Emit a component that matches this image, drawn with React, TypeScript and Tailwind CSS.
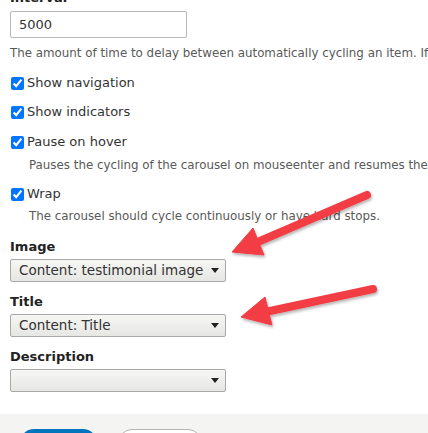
import React from 'react';

const font = { fontFamily: '"DejaVu Sans", "Lucida Grande", Arial, sans-serif' };

function Check({ label, className = '' }: { label: string; className?: string }) {
  return (
    <label className={`flex items-center h-[18px] pl-[11px] ${className}`}>
      <input type="checkbox" checked readOnly className="w-[13px] h-[13px] m-0 accent-[#0075ff]" />
      <span className="ml-[3px] text-[13px] text-[#333]">{label}</span>
    </label>
  );
}

function Select({ value, className = '' }: { value: string; className?: string }) {
  return (
    <div
      className={`ml-[10px] w-[216px] h-[23px] flex items-center justify-between pl-[8px] pr-[6px] border border-[#a8a8a8] rounded-[2px] bg-gradient-to-b from-[#f6f6f4] to-[#e6e6e3] ${className}`}
    >
      <span className="text-[13.5px] text-[#333] leading-none whitespace-nowrap">{value}</span>
      <span className="w-0 h-0 border-l-[4px] border-r-[4px] border-t-[5px] border-l-transparent border-r-transparent border-t-[#222]" />
    </div>
  );
}

export default function App() {
  return (
    <div className="relative w-[428px] h-[433px] overflow-hidden bg-white" style={font}>
      <div className="text-[13px] font-bold text-[#222] leading-[16px] pl-[10px] mt-[-10px]">Interval</div>
      <div className="ml-[10px] mt-[5px] w-[177px] h-[27px] border border-[#b8b8b8] rounded-[2px] flex items-center pl-[8px] text-[13px] text-[#333]">
        5000
      </div>
      <div className="mt-[7px] pl-[10px] text-[11.85px] leading-[16px] text-[#595959] whitespace-nowrap">
        The amount of time to delay between automatically cycling an item. If false, carousel will not automatically cycle.
      </div>

      <Check label="Show navigation" className="mt-[13px]" />
      <Check label="Show indicators" className="mt-[11px]" />
      <Check label="Pause on hover" className="mt-[12px]" />
      <div className="mt-[6px] pl-[29px] text-[11.85px] leading-[16px] text-[#595959] whitespace-nowrap">
        Pauses the cycling of the carousel on mouseenter and resumes the cycling on mouseleave.
      </div>
      <Check label="Wrap" className="mt-[12px]" />
      <div className="mt-[5px] pl-[29px] text-[11.85px] leading-[16px] text-[#595959] whitespace-nowrap">
        The carousel should cycle continuously or have hard stops.
      </div>

      <div className="mt-[15px] pl-[10px] text-[13px] font-bold text-[#222] leading-[16px]">Image</div>
      <Select value="Content: testimonial image" className="mt-[4px]" />
      <div className="mt-[12px] pl-[10px] text-[13px] font-bold text-[#222] leading-[16px]">Title</div>
      <Select value="Content: Title" className="mt-[4px]" />
      <div className="mt-[12px] pl-[10px] text-[13px] font-bold text-[#222] leading-[16px]">Description</div>
      <Select value="" className="mt-[4px]" />

      <div className="mt-[22px] h-[40px] bg-[#f4f4f2] flex items-start pt-[15px] pl-[20px] gap-[21px]">
        <div className="w-[77px] h-[30px] rounded-[14px] bg-[#0074bd]" />
        <div className="w-[84px] h-[30px] rounded-[14px] bg-white border border-[#b6b6b6]" />
      </div>

      <svg className="absolute inset-0 pointer-events-none" width="428" height="433" viewBox="0 0 428 433">
        <defs>
          <filter id="sh" x="-20%" y="-20%" width="140%" height="140%">
            <feDropShadow dx="1" dy="2" stdDeviation="1.5" floodColor="#000" floodOpacity="0.3" />
          </filter>
        </defs>
        <g filter="url(#sh)" fill="#f23c44" stroke="#f23c44">
          <line x1="367" y1="195" x2="260" y2="241" strokeWidth="8" strokeLinecap="round" />
          <polygon points="232,252 253,228 264,255" strokeWidth="1" strokeLinejoin="round" />
          <line x1="373" y1="289" x2="270" y2="311" strokeWidth="8" strokeLinecap="round" />
          <polygon points="241,317 265,297 272,325" strokeWidth="1" strokeLinejoin="round" />
        </g>
      </svg>
    </div>
  );
}
